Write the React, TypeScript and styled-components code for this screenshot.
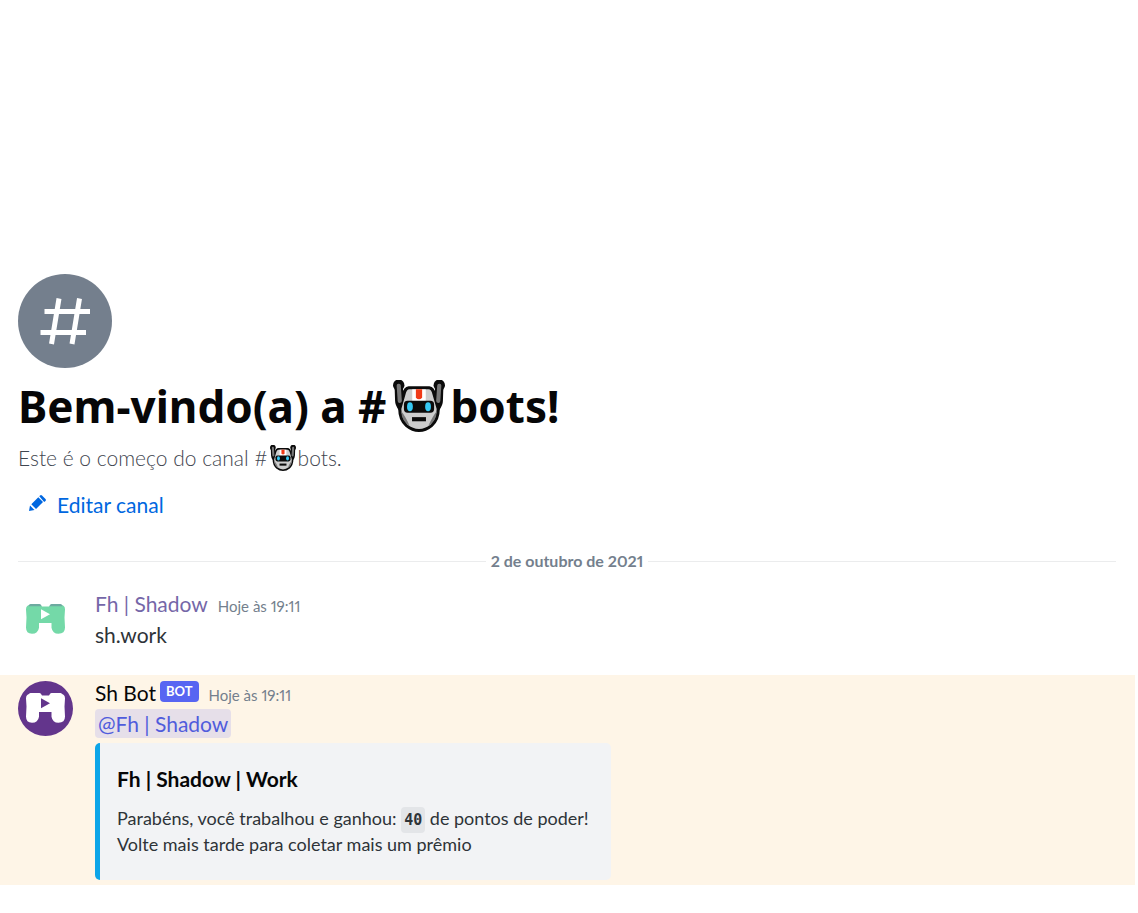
import React from "react";
import styled, { createGlobalStyle } from "styled-components";

const GlobalStyle = createGlobalStyle`
  *, *::before, *::after { box-sizing: border-box; }
  body {
    margin: 0;
    background: #ffffff;
    color: #2e3338;
    font-family: Lato, "Open Sans", sans-serif;
    font-size: 21px;
    font-variant-numeric: proportional-nums;
    line-height: 28px;
  }
  h1, h2, h3, p { margin: 0; }
`;

const Chat = styled.main`
  display: flex;
  flex-direction: column;
  justify-content: flex-end;
  min-height: 100vh;
  padding: 0 3px 28px 0;
`;

const Welcome = styled.header`
  display: flex;
  flex-direction: column;
  align-items: flex-start;
  padding: 0 18px;
`;

const ChannelIcon = styled.div`
  display: flex;
  width: 94px;
  height: 94px;
  border-radius: 50%;
  background: #747f8d;
`;

const Title = styled.h1`
  display: flex;
  align-items: center;
  margin-top: 10px;
  color: #060607;
  font-family: "Noto Sans", "Open Sans", sans-serif;
  font-size: 44px;
  font-weight: 700;
  line-height: 56px;
`;

const Subtitle = styled.p`
  display: flex;
  align-items: center;
  margin-top: 10px;
  color: #3f4650;
  font-weight: 300;
`;

const Emoji = styled.svg<{ $size: number; $gap: number }>`
  flex: none;
  width: ${(p) => p.$size}px;
  height: ${(p) => p.$size}px;
  margin: 0 ${(p) => p.$gap}px;
`;

const EditButton = styled.button`
  display: flex;
  align-items: center;
  gap: 10px;
  margin: 19px 0 0;
  padding: 0 0 0 9px;
  border: 0;
  background: none;
  color: #0067e0;
  font: inherit;
  cursor: pointer;

  svg { width: 20px; height: 20px; }
`;

const DateDivider = styled.div`
  display: flex;
  align-items: center;
  gap: 5px;
  margin: 33px 19px 16px 18px;
  color: #747f8d;
  font-size: 16px;
  font-weight: 700;
  line-height: 18px;

  &::before, &::after {
    content: "";
    flex: 1;
    height: 1px;
    background: #ebeced;
  }
`;

const MessageRow = styled.article<{ $mentioned?: boolean }>`
  display: flex;
  gap: 22px;
  padding: 6px 18px 5px;
  background: ${(p) => (p.$mentioned ? "#fef5e7" : "transparent")};

  & + & { margin-top: 20px; }
`;

const Avatar = styled.svg`
  flex: none;
  width: 55px;
  height: 55px;
  border-radius: 50%;
`;

const Body = styled.div`
  flex: 1;
  min-width: 0;
`;

const NameLine = styled.h2`
  display: flex;
  align-items: baseline;
  font-size: 21px;
  font-weight: 400;
  line-height: 24px;
`;

const Author = styled.span<{ $color: string }>`
  color: ${(p) => p.$color};
`;

const BotTag = styled.span`
  align-self: flex-start;
  margin-left: 4px;
  padding: 0 6px;
  border-radius: 4px;
  background: #5865f2;
  color: #ffffff;
  font-size: 13px;
  font-weight: 700;
  line-height: 21px;
`;

const Time = styled.time`
  margin-left: 10px;
  color: #747f8d;
  font-size: 15px;
  line-height: 20px;
`;

const Content = styled.p`
  margin-top: 4px;
  line-height: 30px;
`;

const Mention = styled.a`
  padding: 2px 3px;
  border-radius: 4px;
  background: #e6dfe9;
  color: #505cdc;
  text-decoration: none;
`;

const Embed = styled.section`
  width: fit-content;
  max-width: 100%;
  margin-top: 4px;
  padding: 22px 22px 23px 17px;
  border-left: 5px solid #0da5e8;
  border-radius: 5px;
  background: #f2f3f5;
`;

const EmbedTitle = styled.h3`
  color: #060607;
  font-size: 21px;
  font-weight: 700;
  line-height: 28px;
`;

const EmbedText = styled.p`
  margin-top: 12px;
  font-size: 18px;
  line-height: 26px;
`;

const Code = styled.code`
  padding: 4px 3px;
  border-radius: 4px;
  background: #e3e5e8;
  font-family: "DejaVu Sans Mono", monospace;
  font-size: 15px;
  font-weight: 700;
  line-height: 18px;
`;

function Robot({ size, gap }: { size: number; gap: number }) {
  return (
    <Emoji $size={size} $gap={gap} viewBox="0 0 50 50" role="img" aria-label="robô">
      <path d="M5.500 5l.500 15q0 3 3 7M44.500 5l-.500 15q0 3-3 7" fill="none" stroke="#0b0b0b" strokeWidth="8" strokeLinecap="round" />
      <circle cx="5.500" cy="5" r="5.500" fill="#0b0b0b" />
      <circle cx="44.500" cy="5" r="5.500" fill="#0b0b0b" />
      <path d="M15 6h20q5 1 6 7l4 15q0 11-7 17-6 5-13 5t-13-5q-7-6-7-17l4-15q1-6 6-7z" fill="#0b0b0b" />
      <path d="M5.500 5.500L6.500 20M44.500 5.500L43.500 20" stroke="#777" strokeWidth="4" strokeLinecap="round" />
      <path d="M16 9h18q3 0 4 5l4 14q0 9-6 15-5 4-11 4t-11-4q-6-6-6-15l4-14q1-5 4-5z" fill="#cdcdcd" />
      <path d="M8 30q4 5 8 14-8-5-8-14M42 30q-4 5-8 14 8-5 8-14" fill="#777" />
      <path d="M18.500 9h13v12h-13z" fill="#fff" />
      <path d="M22 9h6v8q-3 3-6 0z" fill="#f03a17" />
      <rect x="10.500" y="20" width="29" height="11.500" rx="3.500" fill="#0b0b0b" />
      <ellipse cx="16.300" cy="25.700" rx="2.800" ry="4.300" fill="#35c9f4" />
      <ellipse cx="33.700" cy="25.700" rx="2.800" ry="4.300" fill="#35c9f4" />
      <path d="M18.300 35.700h13.400v4H18.300z" fill="#0b0b0b" />
    </Emoji>
  );
}

function Gamepad({ bg, body, caps, play }: { bg: string; body: string; caps: string; play: string }) {
  return (
    <Avatar viewBox="0 0 55 55" aria-hidden="true">
      <rect width="55" height="55" fill={bg} />
      <path d="M12 13h10q1.500 0 2 1.500h7q.500-1.500 2-1.500h10q4 0 4 4.500l-.500 8 .500 10q0 6.200-6.500 6.200-6 0-7-6V31H21v4.700q-1 6-7 6-6 0-6-6.200l.500-10-.500-8Q8 13 12 13z" fill={body} />
      <path d="M12.500 12h9q1.500 0 2 2.200H10.500q.500-2.200 2-2.200zM33.500 12h9q1.500 0 2 2.200H31.500q.500-2.200 2-2.200z" fill={caps} />
      <path d="M23 17.300l9 5-9 5z" fill={play} />
    </Avatar>
  );
}

export default function App() {
  return (
    <>
      <GlobalStyle />
      <Chat>
        <Welcome>
          <ChannelIcon>
            <svg viewBox="0 0 94 94" aria-hidden="true">
              <path d="M41 24.500l-7.500 45.500M61.500 24.500L54 70M26.500 37.500H72M22.500 58.500H68" fill="none" stroke="#fff" strokeWidth="5" />
            </svg>
          </ChannelIcon>
          <Title>Bem-vindo(a) a #<Robot size={52} gap={6} />bots!</Title>
          <Subtitle>Este é o começo do canal #<Robot size={26} gap={2} />bots.</Subtitle>
          <EditButton type="button">
            <svg viewBox="0 0 20 20" fill="currentColor" aria-hidden="true">
              <path d="M2 16l1-5.500L7.500 15zM4.300 9.200l7-7 4.700 4.700-7 7zM12.300 1.200l.700-.700q1-.800 2 0L18.500 4q.800 1 0 2l-1.300 1z" />
            </svg>
            Editar canal
          </EditButton>
        </Welcome>

        <DateDivider role="separator">2 de outubro de 2021</DateDivider>

        <MessageRow>
          <Gamepad bg="#ffffff" body="#74d9a8" caps="#6daaa0" play="#ffffff" />
          <Body>
            <NameLine>
              <Author $color="#7567a8">Fh | Shadow</Author>
              <Time>Hoje às 19:11</Time>
            </NameLine>
            <Content>sh.work</Content>
          </Body>
        </MessageRow>

        <MessageRow $mentioned>
          <Gamepad bg="#63358c" body="#ffffff" caps="#ffffff" play="#63358c" />
          <Body>
            <NameLine>
              <Author $color="#060607">Sh Bot</Author>
              <BotTag>BOT</BotTag>
              <Time>Hoje às 19:11</Time>
            </NameLine>
            <Content><Mention href="#">@Fh | Shadow</Mention></Content>
            <Embed>
              <EmbedTitle>Fh | Shadow | Work</EmbedTitle>
              <EmbedText>
                Parabéns, você trabalhou e ganhou: <Code>40</Code> de pontos de poder!
                <br />
                Volte mais tarde para coletar mais um prêmio
              </EmbedText>
            </Embed>
          </Body>
        </MessageRow>
      </Chat>
    </>
  );
}
